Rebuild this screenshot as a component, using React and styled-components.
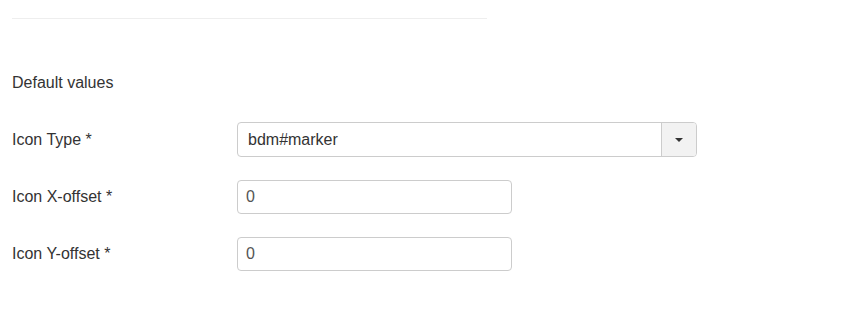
import styled, { createGlobalStyle } from "styled-components";

const GlobalStyle = createGlobalStyle`
  body {
    margin: 0;
    background: #fff;
    font-family: "Liberation Sans", Arial, sans-serif;
    color: #333;
  }
`;

const fields = [
  { label: "Icon Type *", value: "bdm#marker", select: true },
  { label: "Icon X-offset *", value: "0" },
  { label: "Icon Y-offset *", value: "0" },
];

function App() {
  return (
    <>
      <GlobalStyle />
      <Page>
        <Divider />
        <Legend>Default values</Legend>
        <Fields>
          {fields.map((f) => (
            <Row key={f.label}>
              <Label>{f.label}</Label>
              {f.select ? (
                <SelectBox>
                  <SelectValue>{f.value}</SelectValue>
                  <CaretButton>
                    <Caret />
                  </CaretButton>
                </SelectBox>
              ) : (
                <TextInput defaultValue={f.value} />
              )}
            </Row>
          ))}
        </Fields>
      </Page>
    </>
  );
}

export default App;

const Page = styled.div`
  padding: 18px 12px 0;
`;

const Divider = styled.hr`
  width: 475px;
  height: 0;
  margin: 0;
  border: 0;
  border-top: 1px solid #eee;
`;

const Legend = styled.div`
  margin-top: 55px;
  font-size: 16px;
  line-height: 18px;
`;

const Fields = styled.div`
  margin-top: 30px;
  display: flex;
  flex-direction: column;
  gap: 23px;
`;

const Row = styled.div`
  display: grid;
  grid-template-columns: 225px auto;
  align-items: center;
`;

const Label = styled.label`
  font-size: 16px;
`;

const SelectBox = styled.div`
  width: 460px;
  height: 35px;
  box-sizing: border-box;
  border: 1px solid #ccc;
  border-radius: 4px;
  display: flex;
  overflow: hidden;
`;

const SelectValue = styled.div`
  flex: 1;
  padding-left: 10px;
  display: flex;
  align-items: center;
  font-size: 16px;
`;

const CaretButton = styled.div`
  width: 34px;
  border-left: 1px solid #ccc;
  background: #f2f2f2;
  display: flex;
  align-items: center;
  justify-content: center;
`;

const Caret = styled.span`
  width: 0;
  height: 0;
  border-left: 4px solid transparent;
  border-right: 4px solid transparent;
  border-top: 4px solid #333;
`;

const TextInput = styled.input`
  width: 275px;
  height: 34px;
  box-sizing: border-box;
  padding: 0 8px;
  border: 1px solid #ccc;
  border-radius: 4px;
  font-family: "Liberation Sans", Arial, sans-serif;
  font-size: 16px;
  color: #555;
  outline: none;
`;
